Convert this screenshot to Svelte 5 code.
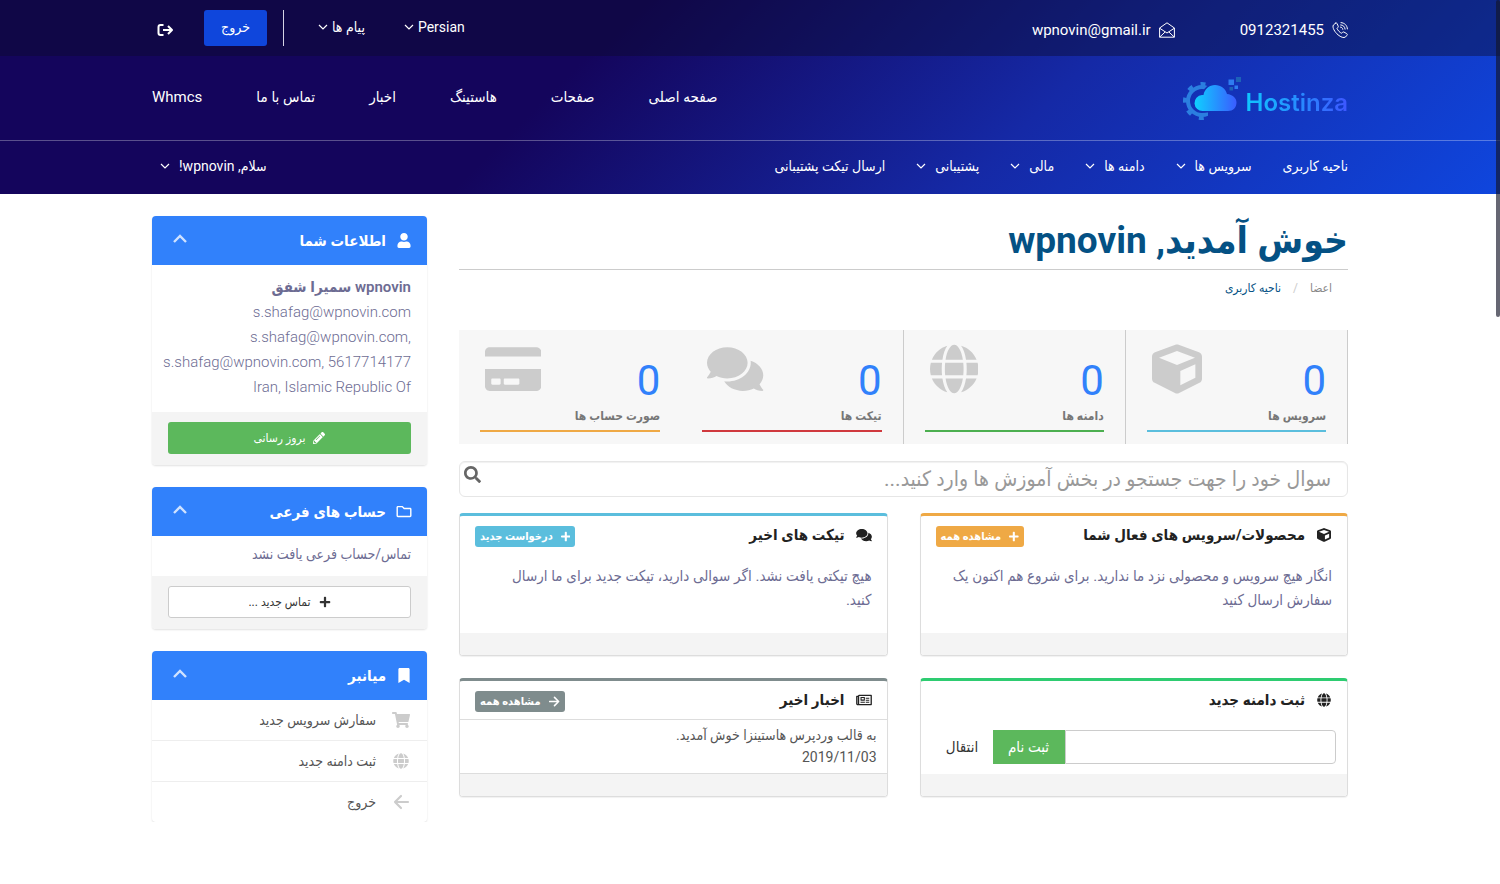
<script lang="ts">
  type Icon = { w: number; h: number; d: string };

  const icons: Record<string, Icon> = {
    globe: { w: 496, h: 512, d: 'M336.5 160C322 70.7 287.8 8 248 8s-74 62.7-88.5 152h177zM152 256c0 22.2 1.2 43.5 3.3 64h185.3c2.1-20.5 3.3-41.8 3.3-64s-1.2-43.5-3.3-64H155.3c-2.1 20.5-3.3 41.8-3.3 64zm324.7-96c-28.6-67.9-86.5-120.4-158-141.6 24.4 33.8 41.2 84.7 50 141.6h108zM177.2 18.4C105.8 39.6 47.8 92.1 19.3 160h108c8.7-56.9 25.5-107.8 49.9-141.6zM487.4 192H372.7c2.1 21 3.3 42.5 3.3 64s-1.2 43-3.3 64h114.6c5.5-20.5 8.6-41.8 8.6-64s-3.1-43.5-8.5-64zM120 256c0-21.5 1.2-43 3.3-64H8.6C3.2 212.5 0 233.8 0 256s3.2 43.5 8.6 64h114.6c-2-21-3.2-42.5-3.2-64zm39.5 96c14.5 89.3 48.7 152 88.5 152s74-62.7 88.5-152h-177zm159.3 141.6c71.4-21.2 129.4-73.7 158-141.6h-108c-8.8 56.9-25.6 107.8-50 141.6zM19.3 352c28.6 67.9 86.5 120.4 158 141.6-24.4-33.8-41.2-84.7-50-141.6h-108z' },
    comments: { w: 576, h: 512, d: 'M416 192c0-88.4-93.1-160-208-160S0 103.6 0 192c0 34.3 14.1 65.9 38 92-13.4 30.2-35.5 54.2-35.8 54.5-2.2 2.3-2.8 5.7-1.5 8.7S4.8 352 8 352c36.6 0 66.9-12.3 88.7-25 32.2 15.7 70.3 25 111.3 25 114.9 0 208-71.6 208-160zm122 220c23.9-26 38-57.7 38-92 0-66.9-53.5-124.2-129.3-148.1.9 6.6 1.3 13.3 1.3 20.1 0 105.9-107.7 192-240 192-10.8 0-21.3-.8-31.7-1.9C207.8 439.6 281.8 480 368 480c41 0 79.1-9.2 111.3-25 21.8 12.7 52.1 25 88.7 25 3.2 0 6.1-1.9 7.3-4.8 1.3-2.9.7-6.3-1.5-8.7-.3-.3-22.4-24.2-35.8-54.5z' },
    card: { w: 576, h: 512, d: 'M0 432c0 26.5 21.5 48 48 48h480c26.5 0 48-21.5 48-48V256H0v176zm192-68c0-6.6 5.4-12 12-12h136c6.6 0 12 5.4 12 12v40c0 6.6-5.4 12-12 12H204c-6.6 0-12-5.4-12-12v-40zm-128 0c0-6.6 5.4-12 12-12h72c6.6 0 12 5.4 12 12v40c0 6.6-5.4 12-12 12H76c-6.6 0-12-5.4-12-12v-40zM576 80v48H0V80c0-26.5 21.5-48 48-48h480c26.5 0 48 21.5 48 48z' },
    cube: { w: 512, h: 512, d: 'M239 7c11-4 23-4 34 0l208 78c19 7 31 25 31 45v225c0 18-10 35-26 43L278 502c-14 7-30 7-43 0L27 398C10 390 0 373 0 355V130c0-20 12-38 31-45L239 7zM256 71L72 140l184 76 184-76-184-69zM290 277v145l154-77V207l-154 70z' },
    cart: { w: 576, h: 512, d: 'M528.12 301.319l47.273-208C578.806 78.301 567.391 64 551.99 64H159.208l-9.166-44.81C147.758 8.021 137.93 0 126.529 0H24C10.745 0 0 10.745 0 24v16c0 13.255 10.745 24 24 24h69.883l70.248 343.435C147.325 417.1 136 435.222 136 456c0 30.928 25.072 56 56 56s56-25.072 56-56c0-15.674-6.447-29.835-16.824-40h209.647C430.447 426.165 424 440.326 424 456c0 30.928 25.072 56 56 56s56-25.072 56-56c0-22.172-12.888-41.332-31.579-50.405l5.517-24.276c3.413-15.018-8.002-29.319-23.403-29.319H218.117l-6.545-32h293.145c11.206 0 20.92-7.754 23.403-18.681z' },
    search: { w: 512, h: 512, d: 'M505 442.7L405.3 343c-4.5-4.5-10.6-7-17-7H372c27.6-35.3 44-79.7 44-128C416 93.1 322.9 0 208 0S0 93.1 0 208s93.1 208 208 208c48.3 0 92.7-16.4 128-44v16.3c0 6.4 2.5 12.5 7 17l99.7 99.7c9.4 9.4 24.6 9.4 33.9 0l28.3-28.3c9.4-9.4 9.4-24.6.1-34zM208 336c-70.7 0-128-57.2-128-128 0-70.7 57.2-128 128-128 70.7 0 128 57.2 128 128 0 70.7-57.2 128-128 128z' },
    user: { w: 448, h: 512, d: 'M224 256c70.7 0 128-57.3 128-128S294.7 0 224 0 96 57.3 96 128s57.3 128 128 128zm89.6 32h-16.7c-22.2 10.2-46.9 16-72.9 16s-50.6-5.8-72.9-16h-16.7C60.2 288 0 348.2 0 422.4V464c0 26.5 21.5 48 48 48h352c26.5 0 48-21.5 48-48v-41.6c0-74.2-60.2-134.4-134.4-134.4z' },
    folder: { w: 512, h: 512, d: 'M464 128H272l-54.6-54.6c-6-6-14.1-9.4-22.6-9.4H48C21.5 64 0 85.5 0 112v288c0 26.5 21.5 48 48 48h416c26.5 0 48-21.5 48-48V176c0-26.5-21.5-48-48-48zm0 272H48V112h140l54.6 54.6c6 6 14.1 9.4 22.6 9.4H464v224z' },
    bookmark: { w: 384, h: 512, d: 'M0 512V48C0 21.49 21.49 0 48 0h288c26.51 0 48 21.49 48 48v464L192 400 0 512z' },
    pencil: { w: 512, h: 512, d: 'M498 142l-46 46c-5 5-12 5-17 0L324 77c-5-5-5-12 0-17l46-46c19-19 49-19 68 0l60 60c19 19 19 49 0 68zm-214-42L22 362 0 484c-3 16 11 31 28 28l122-22 262-262c5-5 5-12 0-17L301 100c-5-5-12-5-17 0zM124 340c-5-6-5-14 0-20l154-154c6-5 14-5 20 0s5 14 0 20L144 340c-6 5-14 5-20 0zm-36 84h48v36l-65 12-31-31 12-65h36v48z' },
    plus: { w: 448, h: 512, d: 'M416 208H272V64c0-18-14-32-32-32h-32c-18 0-32 14-32 32v144H32c-18 0-32 14-32 32v32c0 18 14 32 32 32h144v144c0 18 14 32 32 32h32c18 0 32-14 32-32V304h144c18 0 32-14 32-32v-32c0-18-14-32-32-32z' },
    newspaper: { w: 576, h: 512, d: 'M552 64H112c-20 0-38 12-46 32H24c-13 0-24 11-24 24v272c0 31 25 56 56 56h496c13 0 24-11 24-24V88c0-13-11-24-24-24zM48 392V144h16v248c0 10-16 10-16 0zm480 8H112V112h416v288zM172 280h136c7 0 12-5 12-12V156c0-7-5-12-12-12H172c-7 0-12 5-12 12v112c0 7 5 12 12 12zm28-96h80v56h-80v-56zm-40 172v-32h160v32H160zm192 0v-32h128v32H352zm0-144v-40h128v40H352zm0 72v-36h128v36H352z' },
  };

  const mainNav = ['صفحه اصلی', 'صفحات', 'هاستینگ', 'اخبار', 'تماس با ما', 'Whmcs'];

  const clientNav = [
    { label: 'ناحیه کاربری', menu: false },
    { label: 'سرویس ها', menu: true },
    { label: 'دامنه ها', menu: true },
    { label: 'مالی', menu: true },
    { label: 'پشتیبانی', menu: true },
    { label: 'ارسال تیکت پشتیبانی', menu: false },
  ];

  const stats = [
    { label: 'سرویس ها', value: 0, icon: 'cube', tone: 'info' },
    { label: 'دامنه ها', value: 0, icon: 'globe', tone: 'success' },
    { label: 'تیکت ها', value: 0, icon: 'comments', tone: 'danger' },
    { label: 'صورت حساب ها', value: 0, icon: 'card', tone: 'warning' },
  ];

  let domain = $state('');
  let query = $state('');
  let open = $state({ info: true, contacts: true, shortcuts: true });
</script>

{#snippet icon(name: string)}
  <svg class="icon" viewBox="0 0 {icons[name].w} {icons[name].h}" aria-hidden="true">
    <path fill="currentColor" fill-rule="evenodd" d={icons[name].d} />
  </svg>
{/snippet}

{#snippet chevron()}
  <svg class="chevron" viewBox="0 0 10 6" aria-hidden="true">
    <path d="M1 1l4 4 4-4" fill="none" stroke="currentColor" stroke-width="1.2" />
  </svg>
{/snippet}

{#snippet arrow()}
  <svg class="icon arrow" viewBox="0 0 16 16" aria-hidden="true">
    <path d="M8 2L2 8l6 6M2 8h13" fill="none" stroke="currentColor" stroke-width="2.2" stroke-linecap="round" stroke-linejoin="round" />
  </svg>
{/snippet}

{#snippet cardHead(key: 'info' | 'contacts' | 'shortcuts', name: string, title: string)}
  <header class="card-head">
    {@render icon(name)}
    <h2>{title}</h2>
    <button type="button" aria-label={title} aria-expanded={open[key]} onclick={() => (open[key] = !open[key])}>
      <svg viewBox="0 0 14 9" aria-hidden="true">
        <path d="M1 8l6-6 6 6" fill="none" stroke="currentColor" stroke-width="2.4" />
      </svg>
    </button>
  </header>
{/snippet}

<div class="page" dir="rtl">
  <header class="site-head">
    <div class="topbar">
      <div class="container row">
        <div class="contact">
          <a href="tel:0912321455">
            <svg viewBox="0 0 16 16" aria-hidden="true">
              <g fill="none" stroke="currentColor" stroke-linecap="round" stroke-linejoin="round">
                <path d="M3.5 1.2L1.4 3C-.1 5.5 3 10.3 6 12.8c2.8 2.4 5.8 3.4 7.5 2.2l1.5-1.8c.5-.6.3-1.2-.3-1.6l-2.7-1.5c-.6-.3-1-.2-1.5.3l-.8.8c-1.6-.3-4.2-3-4.7-4.9l.9-.9c.5-.5.5-1 .2-1.500L4.900 1.300c-.4-.5-.9-.5-1.400-.1z" />
                <path d="M9 .6c3.6.2 6.2 2.8 6.4 6.3M8.7 2.9c2.5.1 4.2 1.8 4.4 4.2M8.5 5.1c1.3.1 2.2.9 2.3 2.2" />
              </g>
            </svg>
            <bdi>0912321455</bdi>
          </a>
          <a href="mailto:wpnovin@gmail.ir">
            <svg viewBox="0 0 16 16" aria-hidden="true">
              <path d="M.6 6L8 .8 15.4 6v9.2H.6zM.6 6.2L8 11l7.4-4.8M.8 15l5.3-5M15.2 15l-5.3-5" fill="none" stroke="currentColor" stroke-linejoin="round" />
            </svg>
            <bdi>wpnovin@gmail.ir</bdi>
          </a>
        </div>
        <div class="tools">
          <button type="button" class="plain"><span>Persian</span>{@render chevron()}</button>
          <button type="button" class="plain messages"><span>پیام ها</span>{@render chevron()}</button>
          <span class="divider"></span>
          <a class="logout" href="#logout">خروج</a>
          <a class="exit" href="#logout" aria-label="خروج">
            <svg viewBox="0 0 16 12" aria-hidden="true">
              <path d="M6 1H3a2 2 0 0 0-2 2v6a2 2 0 0 0 2 2h3M5.5 6H14M10.5 2L14.5 6l-4 4" fill="none" stroke="currentColor" stroke-width="2" stroke-linejoin="round" />
            </svg>
          </a>
        </div>
      </div>
    </div>

    <div class="container row brandbar">
      <a class="brand" href="#home" dir="ltr">
        <svg viewBox="0 0 58 44" aria-hidden="true">
          <defs>
            <linearGradient id="cloud" x1="0" x2="1">
              <stop offset="0" stop-color="#0fd0ff" />
              <stop offset="1" stop-color="#3a5cff" />
            </linearGradient>
            <mask id="gear">
              <path fill="#fff" d="M0 0h25v44H0z" />
              <path fill="#000" stroke="#000" stroke-width="3" d="M20 35a8 8 0 0 1-1-16h1.5C21.5 13 26.5 9 32 9c6 0 10.5 3.5 12 9v17z" />
            </mask>
          </defs>
          <g mask="url(#gear)" fill="none" stroke="#2b7fe0">
            <circle cx="19" cy="25" r="14" stroke-width="4" />
            <circle cx="19" cy="25" r="17" stroke-width="4" stroke-dasharray="5 8.35" stroke-dashoffset="2" />
          </g>
          <path fill="url(#cloud)" d="M20 35a8 8 0 0 1-1-16h1.5C21.5 13 26.5 9 32 9c6 0 10.5 3.5 12 9 5.5.5 9.5 4 9.5 8.5 0 5-3.5 8.5-8.5 8.5z" />
          <path fill="#2e7bf0" d="M45.5 3.5H51V9h-5.500zM51.500 9.500H55V13h-3.500z" />
          <path fill="#1d62b8" d="M53 1h5v5h-5zM46.500 11H50v3.500h-3.500z" />
        </svg>
        <span>Hostinza</span>
      </a>
      <nav class="main-nav">
        {#each mainNav as item}
          <a href="#{item}">{item}</a>
        {/each}
      </nav>
    </div>

    <div class="clientbar">
      <div class="container row">
        <nav class="client-nav">
          {#each clientNav as item}
            <a href="#{item.label}"><span>{item.label}</span>{#if item.menu}{@render chevron()}{/if}</a>
          {/each}
        </nav>
        <a class="account" href="#account"><span>سلام, wpnovin!</span>{@render chevron()}</a>
      </div>
    </div>
  </header>

  <div class="container layout">
    <main>
      <h1>خوش آمدید, wpnovin</h1>
      <nav class="crumbs">
        <span>اعضا</span><i>/</i><a href="#clientarea">ناحیه کاربری</a>
      </nav>

      <section class="stats">
        {#each stats as stat}
          <a class="stat {stat.tone}" href="#{stat.label}">
            <span class="stat-icon">{@render icon(stat.icon)}</span>
            <span class="value">{stat.value}</span>
            <span class="label">{stat.label}</span>
          </a>
        {/each}
      </section>

      <form class="search" onsubmit={(e) => e.preventDefault()}>
        <input type="text" aria-label="جستجو" placeholder="سوال خود را جهت جستجو در بخش آموزش ها وارد کنید..." bind:value={query} />
        <button type="submit" aria-label="جستجو">{@render icon('search')}</button>
      </form>

      <div class="panels">
        <section class="panel warning">
          <header>
            {@render icon('cube')}
            <h3>محصولات/سرویس های فعال شما</h3>
            <a class="tag" href="#services">{@render icon('plus')}مشاهده همه</a>
          </header>
          <p>انگار هیچ سرویس و محصولی نزد ما ندارید. برای شروع هم اکنون یک سفارش ارسال کنید</p>
          <footer></footer>
        </section>

        <section class="panel info">
          <header>
            {@render icon('comments')}
            <h3>تیکت های اخیر</h3>
            <a class="tag" href="#ticket">{@render icon('plus')}درخواست جدید</a>
          </header>
          <p>هیچ تیکتی یافت نشد. اگر سوالی دارید، تیکت جدید برای ما ارسال کنید.</p>
          <footer></footer>
        </section>

        <section class="panel emerald">
          <header>
            {@render icon('globe')}
            <h3>ثبت دامنه جدید</h3>
          </header>
          <form class="domain" onsubmit={(e) => e.preventDefault()}>
            <input type="text" aria-label="ثبت دامنه جدید" bind:value={domain} />
            <button type="submit" class="register">ثبت نام</button>
            <button type="button" class="transfer">انتقال</button>
          </form>
          <footer></footer>
        </section>

        <section class="panel slate">
          <header>
            {@render icon('newspaper')}
            <h3>اخبار اخیر</h3>
            <a class="tag" href="#news"><span class="flip">{@render arrow()}</span>مشاهده همه</a>
          </header>
          <a class="news" href="#news-1">
            <span>به قالب وردپرس هاستینزا خوش آمدید.</span>
            <time datetime="2019-11-03">2019/11/03</time>
          </a>
          <footer></footer>
        </section>
      </div>
    </main>

    <aside>
      <section class="card">
        {@render cardHead('info', 'user', 'اطلاعات شما')}
        {#if open.info}
          <address dir="ltr">
            <strong dir="rtl">wpnovin سمیرا شفق</strong>
            <span>s.shafag@wpnovin.com</span>
            <span>s.shafag@wpnovin.com,</span>
            <span>s.shafag@wpnovin.com, 5617714177</span>
            <span>Iran, Islamic Republic Of</span>
          </address>
          <footer><a class="button green" href="#update">{@render icon('pencil')}بروز رسانی</a></footer>
        {/if}
      </section>

      <section class="card">
        {@render cardHead('contacts', 'folder', 'حساب های فرعی')}
        {#if open.contacts}
          <p>تماس/حساب فرعی یافت نشد</p>
          <footer><a class="button white" href="#contact">{@render icon('plus')}تماس جدید ...</a></footer>
        {/if}
      </section>

      <section class="card">
        {@render cardHead('shortcuts', 'bookmark', 'میانبر')}
        {#if open.shortcuts}
          <ul>
            <li><a href="#order">{@render icon('cart')}سفارش سرویس جدید</a></li>
            <li><a href="#domain">{@render icon('globe')}ثبت دامنه جدید</a></li>
            <li><a href="#logout">{@render arrow()}خروج</a></li>
          </ul>
        {/if}
      </section>
    </aside>
  </div>
  <div class="scroll-thumb" aria-hidden="true"></div>
</div>

<style>
  :global(body) { background: #fff; }
  .page {
    --blue: #3181fb;
    --info: #5bbedd;
    --success: #4caf50;
    --danger: #d0393e;
    --warning: #efa945;
    --muted-ink: #6d6c93;
    font-family: Roboto, "DejaVu Sans Condensed", "DejaVu Sans", sans-serif;
    font-size: 14px;
    color: #333;
  }
  .page * { box-sizing: border-box; }
  a { color: inherit; text-decoration: none; }
  button, input { font: inherit; color: inherit; }
  button { padding: 0; border: 0; background: none; cursor: pointer; }
  h1, h2, h3, p, ul { margin: 0; padding: 0; }
  svg { display: block; flex: none; }
  .icon { height: 1em; }
  .chevron { width: 10px; height: 6px; }
  .container { width: 80%; max-width: 1196px; margin: 0 auto; }
  .row { display: flex; align-items: center; justify-content: space-between; }

  /* Header */
  .site-head {
    color: #fff;
    background: linear-gradient(135deg, #14055c 0%, #14055c 38%, #1529a6 68%, #0f46de 100%);
  }
  .topbar { background: rgba(10, 10, 40, 0.4); }
  .topbar .row { height: 56px; }
  .contact, .tools, .plain, .contact a { display: flex; align-items: center; }
  .contact { gap: 65px; font-size: 15px; padding-top: 3px; }
  .contact a { gap: 8px; }
  .contact svg { width: 16px; height: 16px; }
  .plain { gap: 4px; padding-bottom: 2px; }
  .messages { margin-right: 39px; }
  .divider { width: 1px; height: 36px; margin: 0 34px 0 16px; background: #d5d3e4; }
  .logout {
    width: 63px;
    height: 36px;
    line-height: 34px;
    text-align: center;
    border-radius: 3px;
    background: #0f46dc;
  }
  .exit { margin-right: 30px; padding: 4px 0 0 5px; }
  .exit svg { width: 17px; height: 12px; }
  .brandbar { height: 84px; }
  .brand { display: flex; align-items: center; gap: 5px; }
  .brand svg { width: 58px; height: 44px; }
  .brand span {
    padding-top: 10px;
    font: 600 24px/30px Inter, sans-serif;
    color: transparent;
    background: linear-gradient(90deg, #0fc6ff, #3d56ff);
    background-clip: text;
  }
  .main-nav { display: flex; gap: 54px; padding-bottom: 2px; font-size: 15px; }
  .clientbar { border-top: 1px solid rgba(255, 255, 255, 0.3); }
  .clientbar .row { height: 53px; padding-bottom: 4px; }
  .client-nav { display: flex; gap: 31px; }
  .client-nav a, .account { display: flex; align-items: center; gap: 9px; }
  .account { padding-left: 8px; }

  /* Columns */
  .layout { display: grid; grid-template-columns: minmax(0, 1fr) 275px; gap: 32px; padding-top: 22px; }
  h1 {
    height: 54px;
    font-size: 37px;
    line-height: 50px;
    color: #045184;
    border-bottom: 1px solid #ccc;
  }
  .crumbs { display: flex; gap: 12px; padding: 0 16px; line-height: 36px; font-size: 12px; color: #888; }
  .crumbs i { font-style: normal; color: #ccc; }
  .crumbs a { color: #045184; }

  .stats { display: grid; grid-template-columns: repeat(4, 1fr); margin-top: 24px; background: #f7f7f7; }
  .stat {
    display: grid;
    grid-template-columns: 1fr auto;
    height: 114px;
    padding: 14px 21px 12px;
    border-right: 1px solid #ccc;
    color: #777;
  }
  .stat:nth-child(4) { border-right: 0; }
  .stat-icon { grid-column: 2; grid-row: 1; padding-left: 5px; color: #ccc; font-size: 50px; }
  .value { grid-column: 1; grid-row: 1; padding-top: 12px; font-size: 42px; line-height: 50px; color: var(--blue); }
  .label {
    grid-column: 1 / -1;
    height: 26px;
    font-size: 12px;
    font-weight: 600;
    line-height: 20px;
    border-bottom: 2px solid;
  }
  .stat.info .label { border-color: var(--info); }
  .stat.success .label { border-color: var(--success); }
  .stat.danger .label { border-color: var(--danger); }
  .stat.warning .label { border-color: var(--warning); }

  .search {
    display: flex;
    height: 36px;
    margin: 17px 0 16px;
    border: 1px solid #e6e6e6;
    border-radius: 6px;
    box-shadow: inset 0 1px 1px rgba(0, 0, 0, 0.06);
  }
  .search input { flex: 1; min-width: 0; padding: 0 16px; border: 0; background: none; font-size: 21px; outline: 0; }
  .search input::placeholder { color: #999; opacity: 1; }
  .search button { display: flex; padding: 4px; font-size: 17px; color: #666; }

  .panels { display: grid; grid-template-columns: 1fr 1fr; gap: 22px 32px; }
  .panel {
    display: flex;
    flex-direction: column;
    min-height: 118px;
    overflow: hidden;
    border: 1px solid #ddd;
    border-top: 3px solid;
    border-radius: 4px;
    box-shadow: 0 1px 1px rgba(0, 0, 0, 0.06);
  }
  .panel.info { border-top-color: var(--info); }
  .panel.warning { border-top-color: var(--warning); }
  .panel.emerald { border-top-color: #2ecc71; }
  .panel.slate { border-top-color: #7f8c8d; }
  .panel header { display: flex; align-items: center; height: 38px; padding: 0 15px; color: #222; }
  .panel header > .icon { width: 16px; height: 14px; }
  .panel h3 { margin-right: 11px; font-size: 15px; }
  .tag {
    display: flex;
    align-items: center;
    gap: 8px;
    height: 21px;
    margin: 3px auto 0 0;
    padding: 0 5px;
    border-radius: 3px;
    font-size: 11px;
    font-weight: 700;
    color: #fff;
    background: var(--info);
  }
  .panel.warning .tag { background: var(--warning); }
  .panel.slate .tag { background: #7f8c8d; }
  .flip { transform: scaleX(-1); }
  .panel p { padding: 10px 15px 21px 24px; font-size: 15px; line-height: 24px; color: var(--muted-ink); }
  .panel footer { height: 22px; margin-top: auto; background: #f4f4f4; }
  .domain { display: flex; height: 34px; margin: 11px 11px 8px 0; font-size: 15px; }
  .domain input { flex: 1; min-width: 0; border: 1px solid #ccc; border-radius: 0 4px 4px 0; background: #fff; }
  .domain .register { width: 72px; color: #fff; background: #5cb85c; }
  .domain .transfer { width: 72px; padding-left: 11px; }
  .news {
    display: grid;
    padding: 4px 10px 5px;
    line-height: 22px;
    color: #555;
    border: solid #ddd;
    border-width: 1px 0;
  }

  /* Sidebar cards */
  aside { display: flex; flex-direction: column; gap: 22px; }
  .card { overflow: hidden; border-radius: 4px; box-shadow: 0 1px 2px rgba(0, 0, 0, 0.12); }
  .card-head { display: flex; align-items: center; height: 49px; padding: 0 15px; font-size: 15px; color: #fff; background: var(--blue); }
  .card-head .icon { width: 16px; }
  .card-head h2 { margin-right: 10px; font-size: 15px; }
  .card-head button { margin: 0 auto 4px 6px; color: #cfe2ff; }
  .card-head button svg { width: 14px; height: 9px; }
  .card address {
    display: grid;
    padding: 10px 16px 12px 10px;
    font-size: 15px;
    font-style: normal;
    font-weight: 300;
    line-height: 25px;
    text-align: right;
    white-space: nowrap;
    color: var(--muted-ink);
  }
  .card strong { font-weight: 600; text-align: right; }
  .card p { padding: 6px 16px 10px; line-height: 24px; color: var(--muted-ink); }
  .card footer { padding: 10px 16px 11px; background: #f4f4f4; }
  .button {
    display: flex;
    align-items: center;
    justify-content: center;
    gap: 8px;
    height: 32px;
    border-radius: 3px;
    font-size: 12px;
  }
  .button .icon { width: 12px; height: 12px; }
  .button.green { color: #fff; background: #5cb85c; }
  .button.white { color: #333; background: #fff; border: 1px solid #ccc; }
  .card ul { list-style: none; }
  .card li + li { border-top: 1px solid #eee; }
  .card li a { display: flex; align-items: center; gap: 15px; height: 40px; padding: 0 16px; color: #555; }
  .card li .icon { width: 20px; height: 16px; color: #ccc; }

  .scroll-thumb {
    position: fixed;
    top: 0;
    right: 0;
    width: 4px;
    height: 317px;
    border-radius: 3px;
    background: rgba(20, 22, 40, 0.65);
  }
</style>
